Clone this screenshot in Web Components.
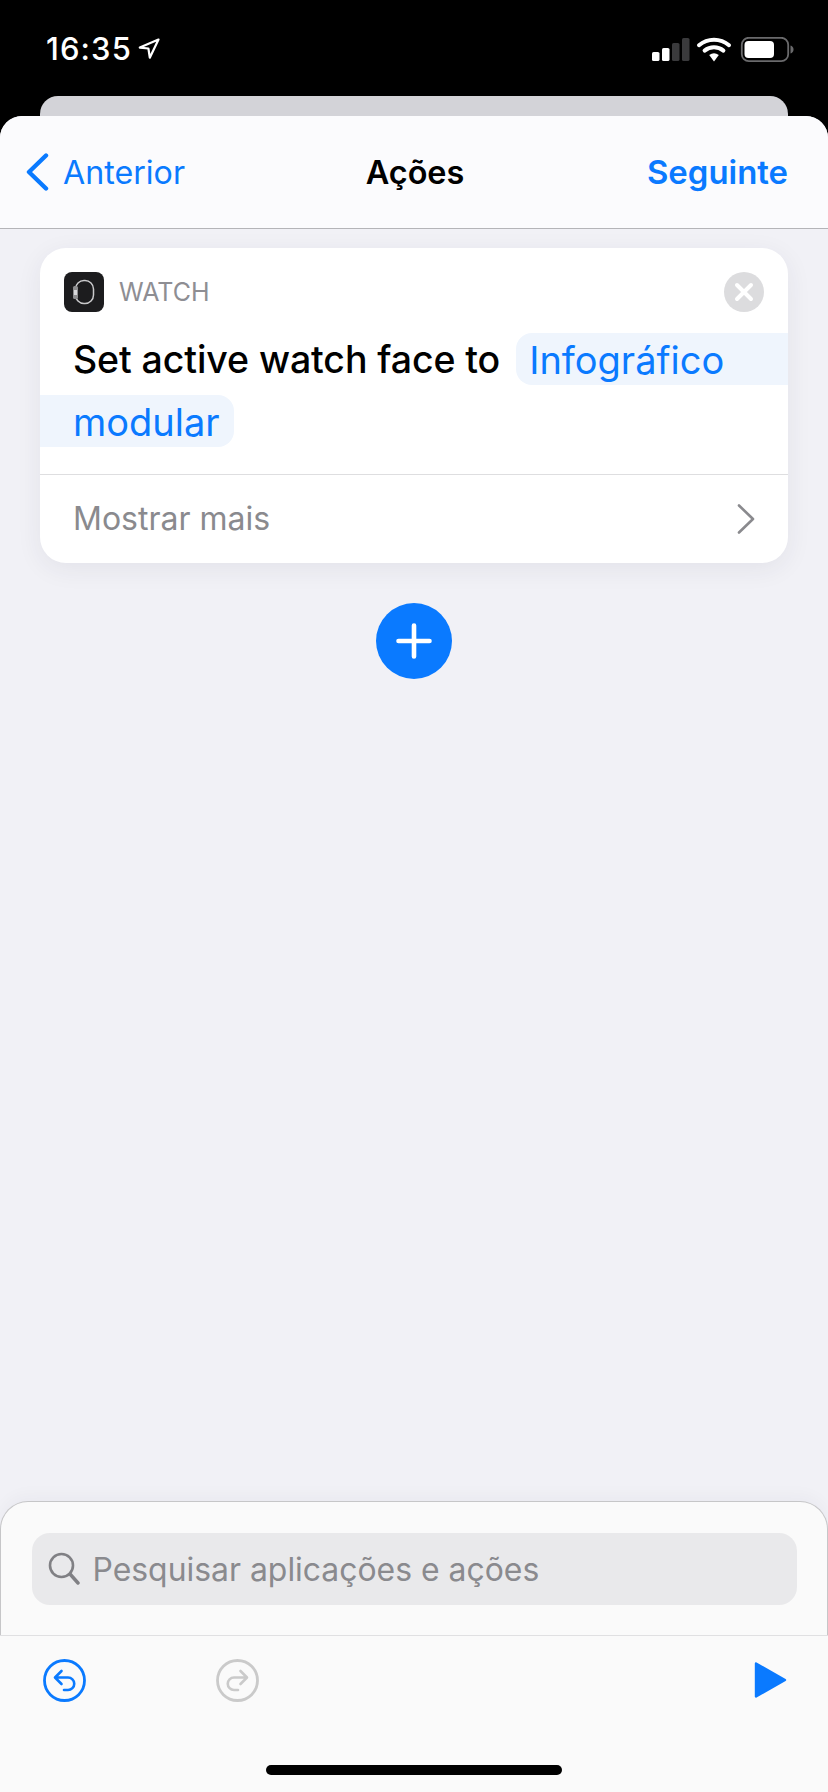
<!DOCTYPE html>
<html lang="pt"><head><meta charset="utf-8"><title>Ações</title>
<style>
html,body{margin:0;padding:0;background:#000;}
body{width:828px;height:1792px;overflow:hidden;font-family:Inter,"Liberation Sans",sans-serif;}
</style></head><body>
<app-page>
  <status-bar slot="status" time="16:35"></status-bar>
  <nav-bar slot="nav" back="Anterior" title="Ações" next="Seguinte"></nav-bar>
  <action-card slot="content" app="WATCH" text="Set active watch face to" first="Infográfico" second="modular" more="Mostrar mais"></action-card>
  <add-button slot="content"></add-button>
  <search-panel slot="bottom" placeholder="Pesquisar aplicações e ações"></search-panel>
  <tool-bar slot="bottom"></tool-bar>
</app-page>
<script>
function def(name,html,init){
  customElements.define(name,class extends HTMLElement{
    constructor(){super();this.attachShadow({mode:'open'}).innerHTML=html;}
    connectedCallback(){ if(init) init(this,this.shadowRoot); }
  });
}
const setText=(root,map,host)=>{for(const k in map){root.querySelector(k).textContent=host.getAttribute(map[k]);}};

def('app-page',`<style>
:host{display:flex;flex-direction:column;width:828px;height:1792px;background:#000;}
.sheet{flex:1;min-height:0;display:flex;flex-direction:column;background:#f1f1f6;border-radius:22px 22px 0 0;overflow:hidden;}
.content{flex:1;display:flex;flex-direction:column;align-items:center;padding-top:19px;}
.bottom{display:flex;flex-direction:column;}
</style>
<slot name="status"></slot>
<div class="sheet">
  <slot name="nav"></slot>
  <div class="content"><slot name="content"></slot></div>
  <div class="bottom"><slot name="bottom"></slot></div>
</div>`);

def('status-bar',`<style>
:host{display:block;height:116px;background:#000;color:#fff;}
.row{height:96px;box-sizing:border-box;padding:0 24px 0 46px;display:flex;justify-content:space-between;align-items:flex-start;}
.left{display:flex;align-items:center;gap:6px;height:30px;margin-top:34px;}
.t{font:500 31px/30px Inter,sans-serif;letter-spacing:1.1px;}
.right{display:flex;align-items:center;height:30px;margin-top:37px;}
.peek{height:20px;margin:0 40px;background:#d3d3d8;border-radius:18px 18px 0 0;}
svg{display:block;}
</style>
<div class="row">
 <div class="left"><span class="t"></span>
  <svg width="22" height="22" viewBox="0 0 22 22"><path d="M20.5 1.5 1.8 9.6l8.6.9 1.4 9.2z" fill="none" stroke="#fff" stroke-width="2.2" stroke-linejoin="round"/></svg>
 </div>
 <div class="right">
  <svg width="152" height="30" viewBox="0 0 152 30">
   <rect x="0" y="15" width="7.5" height="9" rx="1.6" fill="#fff"/>
   <rect x="10" y="11" width="7.5" height="13" rx="1.6" fill="#fff"/>
   <rect x="20" y="6" width="7.5" height="18" rx="1.6" fill="#3a3a3c"/>
   <rect x="30" y="1" width="7.5" height="23" rx="1.6" fill="#3a3a3c"/>
   <path d="M47 8.2a23 23 0 0 1 30 0" fill="none" stroke="#fff" stroke-width="4" stroke-linecap="round"/>
   <path d="M52.6 13.6a15 15 0 0 1 18.8 0" fill="none" stroke="#fff" stroke-width="4" stroke-linecap="round"/>
   <path d="M57.2 18a8 8 0 0 1 9.6 0L62 24.4z" fill="#fff"/>
   <rect x="89.8" y="0.8" width="46.4" height="23.4" rx="7" fill="none" stroke="#6a6a6c" stroke-width="1.8"/>
   <rect x="92.5" y="4" width="29.5" height="17" rx="4" fill="#fff"/>
   <path d="M138.5 8.5c1.8.5 3 2 3 4s-1.2 3.5-3 4z" fill="#6a6a6c"/>
  </svg>
 </div>
</div>
<div class="peek"></div>`,(h,r)=>setText(r,{'.t':'time'},h));

def('nav-bar',`<style>
:host{display:flex;align-items:center;height:113px;box-sizing:border-box;padding:0 40px 0 25px;background:#fbfbfd;border-bottom:1px solid #b4b4b8;font-family:Inter,sans-serif;}
.back{flex:1;display:flex;align-items:center;gap:14px;color:#0a7aff;font-weight:400;font-size:32.2px;}
.title{font-weight:600;color:#000;font-size:32.4px;margin-left:17px;}
.next{flex:1;text-align:right;color:#0a7aff;font-weight:600;font-size:32.9px;}
svg{display:block;}
</style>
<div class="back"><svg width="24" height="38" viewBox="0 0 24 38"><path d="M21 2.5 4 19l17 16.5" fill="none" stroke="#0a7aff" stroke-width="4.4" stroke-linecap="round" stroke-linejoin="round"/></svg><span class="b"></span></div>
<div class="title"></div><div class="next"></div>`,(h,r)=>setText(r,{'.b':'back','.title':'title','.next':'next'},h));

def('action-card',`<style>
:host{display:block;width:748px;background:#fff;border-radius:26px;box-shadow:0 6px 26px rgba(40,40,70,.07);font-family:Inter,sans-serif;overflow:hidden;}
.head{display:flex;align-items:center;height:40px;padding:24px 24px 0 24px;gap:15px;}
.app{flex:1;font-size:25px;color:#8e8e93;}
.x,.ico{display:block;flex:none;}
.body{display:flex;flex-direction:column;gap:10px;margin-top:21px;font-size:38px;line-height:54px;height:114px;}
.r1{display:flex;padding-left:33px;white-space:nowrap;height:52px;}
.txt{color:#000;font-weight:500;font-size:37.5px;letter-spacing:-.1px;margin-right:16px;}
.pill{background:#eff5fd;color:#0a7aff;font-weight:400;height:52px;box-sizing:border-box;}
.p1{flex:1;padding-left:13px;border-radius:16px 0 0 16px;}
.p2{align-self:flex-start;padding:0 14px 0 33px;border-radius:0 16px 16px 0;}
.more{display:flex;align-items:center;justify-content:space-between;height:89px;margin-top:27px;border-top:1px solid #dedee0;padding:0 33px 1px 33px;box-sizing:border-box;color:#8a8a8e;font-size:32px;}
</style>
<div class="head">
 <svg class="ico" width="40" height="40" viewBox="0 0 40 40">
  <rect width="40" height="40" rx="8" fill="#1c1c1e"/>
  <rect x="11.5" y="8.5" width="18" height="23" rx="8.5" fill="none" stroke="#c9c9cb" stroke-width="1.5"/>
  <rect x="9" y="14" width="5" height="13" rx="1.5" fill="#8e8e90"/>
  <rect x="10" y="18" width="3" height="5" fill="#d8d8da"/>
 </svg>
 <span class="app"></span>
 <svg class="x" width="40" height="40" viewBox="0 0 40 40"><circle cx="20" cy="20" r="20" fill="#dcdcde"/><path d="M13 13l14 14M27 13 13 27" stroke="#fff" stroke-width="4" stroke-linecap="round"/></svg>
</div>
<div class="body">
 <div class="r1"><span class="txt"></span><span class="pill p1"></span></div>
 <span class="pill p2"></span>
</div>
<div class="more"><span class="m"></span>
 <svg width="18" height="30" viewBox="0 0 18 30"><path d="M2 1.500 16 15 2 28.500" fill="none" stroke="#8a8a8e" stroke-width="2.600" stroke-linecap="round" stroke-linejoin="round"/></svg>
</div>`,(h,r)=>setText(r,{'.app':'app','.txt':'text','.p1':'first','.p2':'second','.m':'more'},h));

def('add-button',`<style>
:host{display:block;width:76px;height:76px;margin-top:40px;}
svg{display:block;}
</style>
<svg width="76" height="76" viewBox="0 0 76 76"><circle cx="38" cy="38" r="38" fill="#0a7aff"/><path d="M38 22.500v31M22.500 38h31" stroke="#fff" stroke-width="4.600" stroke-linecap="round"/></svg>`);

def('search-panel',`<style>
:host{display:block;height:134px;box-sizing:border-box;background:#fafafa;border:1.5px solid #c6c6c8;border-bottom:0;border-radius:28px 28px 0 0;padding:30.5px 30.5px 0;box-shadow:0 -6px 16px rgba(40,40,70,.03);font-family:Inter,sans-serif;}
.f{height:72px;background:#e9e9eb;border-radius:18px;display:flex;align-items:center;padding:0 16px;gap:13px;color:#8a8a8e;font-size:31.9px;}
.p{padding-top:2px;}
svg{display:block;flex:none;}
</style>
<div class="f"><svg width="32" height="34" viewBox="0 0 32 34"><circle cx="13.500" cy="13.500" r="11.500" fill="none" stroke="#808084" stroke-width="2.600"/><path d="M22 22l8 9" stroke="#808084" stroke-width="3.400" stroke-linecap="round"/></svg><span class="p"></span></div>`,(h,r)=>setText(r,{'.p':'placeholder'},h));

def('tool-bar',`<style>
:host{display:flex;flex-direction:column;height:157px;box-sizing:border-box;background:#fafafa;border-top:1px solid #e0e0e2;}
.icons{display:flex;align-items:center;height:88px;padding:0 41px 0 43px;}
.redo{margin-left:130px;}
.play{margin-left:auto;}
.ind{width:296px;height:10px;border-radius:5px;background:#000;margin:41px auto 0;}
svg{display:block;}
</style>
<div class="icons">
 <svg width="43" height="43" viewBox="0 0 43 43"><circle cx="21.500" cy="21.500" r="20" fill="none" stroke="#0a7aff" stroke-width="2.800"/><path d="M18.500 12 12 18.500l6.500 6.500M12.500 18.500h12.500a6 6 0 0 1 0 12.500h-4" fill="none" stroke="#0a7aff" stroke-width="2.600" stroke-linecap="round" stroke-linejoin="round"/></svg>
 <svg class="redo" width="43" height="43" viewBox="0 0 43 43"><circle cx="21.500" cy="21.500" r="20" fill="none" stroke="#cacaca" stroke-width="2.800"/><path d="M24.500 12 31 18.500l-6.500 6.500M30.500 18.500h-12.500a6 6 0 0 0 0 12.500h4" fill="none" stroke="#cacaca" stroke-width="2.600" stroke-linecap="round" stroke-linejoin="round"/></svg>
 <svg class="play" width="33" height="38" viewBox="0 0 33 38"><path d="M2 2.500 31 19 2 35.500z" fill="#0a7aff" stroke="#0a7aff" stroke-width="2.400" stroke-linejoin="round"/></svg>
</div>
<div class="ind"></div>`);
</script>
</body></html>
